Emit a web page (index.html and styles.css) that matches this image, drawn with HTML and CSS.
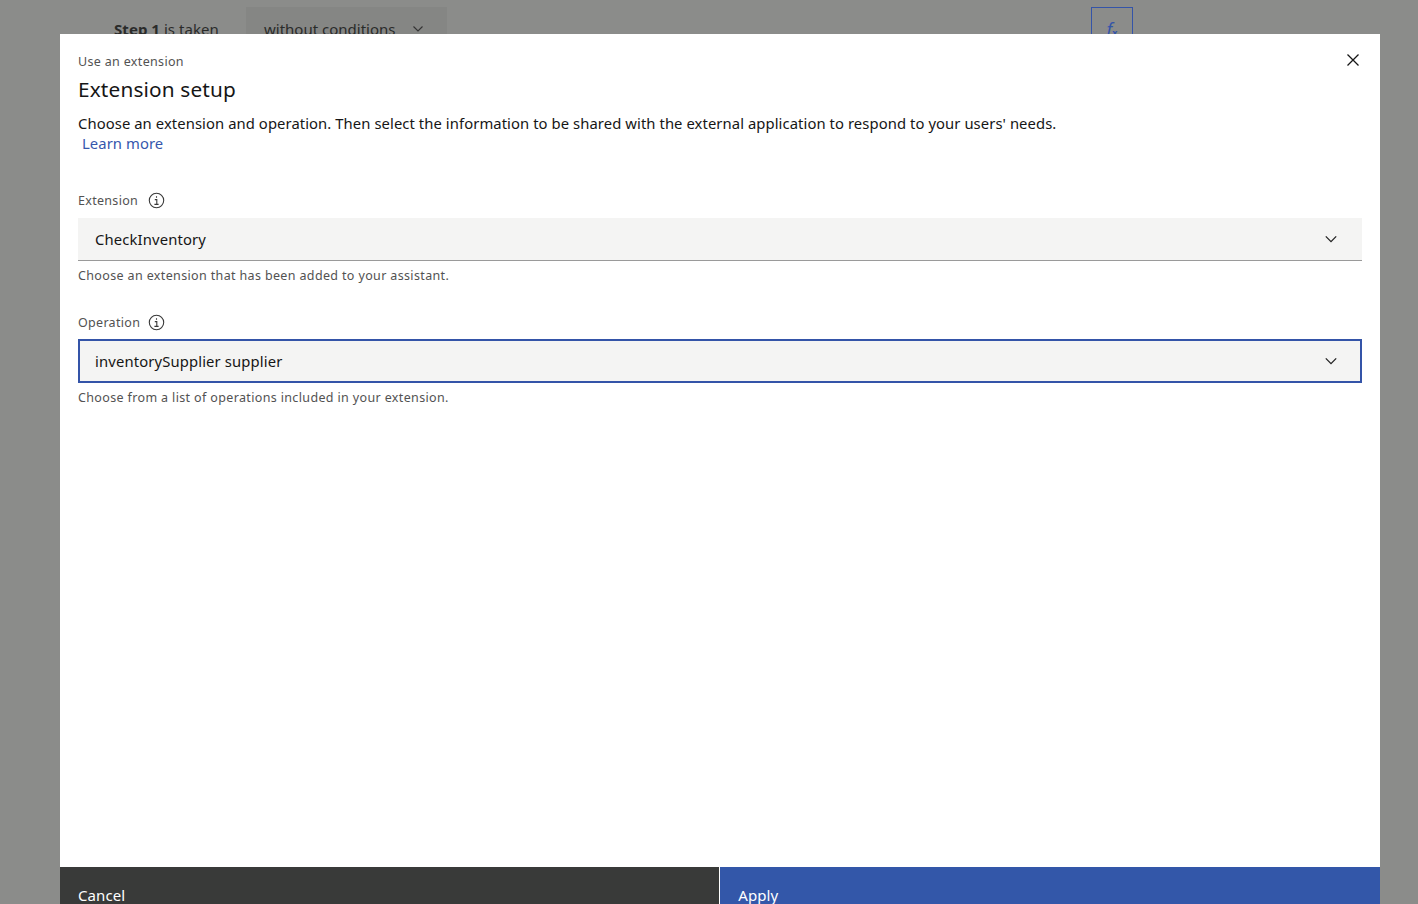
FILE: index.html
```html
<!DOCTYPE html>
<html lang="en">
<head>
<meta charset="utf-8">
<title>Extension setup</title>
<link rel="stylesheet" href="styles.css">
</head>
<body>
<div class="behind">
  <div class="behind-step"><b>Step 1</b> is taken</div>
  <div class="behind-select">without conditions
    <svg class="chev" width="16" height="16" viewBox="0 0 16 16"><path d="M3.5 5.5 8 10l4.5-4.5" fill="none" stroke="#333" stroke-width="1.1"/></svg>
  </div>
  <div class="behind-fx"><span class="fx-f">f</span><span class="fx-x">x</span></div>
</div>
<div class="modal">
  <header class="head">
    <div class="eyebrow">Use an extension</div>
    <h1 class="title">Extension setup</h1>
    <p class="desc">Choose an extension and operation. Then select the information to be shared with the external application to respond to your users' needs.</p>
    <a class="learn" href="#">Learn more</a>
    <button class="close" aria-label="Close">
      <svg width="14" height="14" viewBox="0 0 14 14"><path d="M1.5 1.5l11 11M12.5 1.5l-11 11" fill="none" stroke="#161616" stroke-width="1.3"/></svg>
    </button>
  </header>
  <div class="body">
    <div class="field">
      <div class="label"><span class="label-text">Extension</span>
        <svg class="info" width="17" height="17" viewBox="0 0 17 17"><circle cx="8.5" cy="8.5" r="7.2" fill="none" stroke="#393939" stroke-width="1.1"/><path d="M8.5 4.2v1.5M6.8 7.6h2v4.6M6.4 12.4h4.2" fill="none" stroke="#393939" stroke-width="1.1"/></svg>
      </div>
      <div class="select">
        <span>CheckInventory</span>
        <svg width="14" height="14" viewBox="0 0 14 14"><path d="M1.8 4.4 7 9.6l5.2-5.2" fill="none" stroke="#222" stroke-width="1.3"/></svg>
      </div>
      <div class="helper">Choose an extension that has been added to your assistant.</div>
    </div>
    <div class="field">
      <div class="label"><span class="label-text">Operation</span>
        <svg class="info" width="17" height="17" viewBox="0 0 17 17"><circle cx="8.5" cy="8.5" r="7.2" fill="none" stroke="#393939" stroke-width="1.1"/><path d="M8.5 4.2v1.5M6.8 7.6h2v4.6M6.4 12.4h4.2" fill="none" stroke="#393939" stroke-width="1.1"/></svg>
      </div>
      <div class="select focused">
        <span>inventorySupplier supplier</span>
        <svg width="14" height="14" viewBox="0 0 14 14"><path d="M1.8 4.4 7 9.6l5.2-5.2" fill="none" stroke="#222" stroke-width="1.3"/></svg>
      </div>
      <div class="helper">Choose from a list of operations included in your extension.</div>
    </div>
  </div>
  <footer class="foot">
    <button class="btn cancel">Cancel</button>
    <button class="btn apply">Apply</button>
  </footer>
</div>
</body>
</html>
```

FILE: styles.css
```css
* { box-sizing: border-box; }
html, body { margin: 0; height: 100%; }
body {
  position: relative;
  width: 1418px;
  height: 904px;
  overflow: hidden;
  background: #8b8c8a;
  font-family: "Noto Sans", "Liberation Sans", sans-serif;
  color: #161616;
}
.behind {
  display: flex;
  align-items: flex-start;
  padding: 7px 0 0 114px;
  color: #2a2b2a;
  font-size: 15px;
}
.behind-step { width: 132px; padding-top: 12px; line-height: 20px; letter-spacing: .05px; }
.behind-select {
  display: flex;
  gap: 15px;
  width: 201px;
  height: 40px;
  padding: 12px 0 0 18px;
  line-height: 20px;
  background: #858684;
}
.chev { margin-top: 2px; }
.behind-fx {
  width: 42px;
  height: 40px;
  margin-left: 644px;
  border: 1px solid #3454a8;
  color: #3454a8;
  text-align: center;
  padding-top: 11px;
  line-height: 20px;
}
.fx-f { font-size: 18px; font-style: italic; }
.fx-x { font-size: 9px; font-weight: 700; }
.modal {
  position: absolute;
  left: 60px;
  top: 34px;
  width: 1319.5px;
  height: 870px;
  background: #fff;
  display: flex;
  flex-direction: column;
}
.head { position: relative; padding: 18px 18px 0; }
.eyebrow { font-size: 12.5px; line-height: 18px; color: #525252; letter-spacing: .33px; padding-top: 1px; }
.title { margin: 4px 0 0; font-size: 20.8px; line-height: 28px; font-weight: 400; letter-spacing: .15px; }
.desc { margin: 10px 0 0; font-size: 14.8px; line-height: 20px; letter-spacing: .08px; }
.learn { display: block; margin-left: 4px; font-size: 14.8px; line-height: 20px; letter-spacing: .08px; color: #3557ad; text-decoration: none; }
.close {
  position: absolute;
  top: 19px;
  right: 20px;
  padding: 0;
  border: 0;
  background: none;
  display: flex;
}
.body { flex: 1; padding: 37px 18px 0; display: flex; flex-direction: column; gap: 27px; }
.label {
  display: flex;
  align-items: center;
  gap: 9px;
  height: 20px;
  font-size: 12.5px;
  letter-spacing: .3px;
  color: #525252;
}
.label-text { width: 61px; white-space: nowrap; }
.select {
  display: flex;
  align-items: center;
  justify-content: space-between;
  height: 43px;
  margin-top: 8px;
  padding: 0 24px 0 17px;
  background: #f4f4f3;
  border-bottom: 1.5px solid #9a9a9a;
  font-size: 14.8px;
  letter-spacing: .14px;
}
.select.focused { border: 2.5px solid #3454a8; padding: 0 21.5px 0 15px; margin-top: 7px; height: 44px; }
.helper { margin-top: 6px; font-size: 12.5px; line-height: 18px; letter-spacing: .36px; color: #525252; }
.foot { display: flex; height: 37px; gap: 1px; flex: none; }
.btn {
  flex: 1;
  border: 0;
  padding: 18px 18px 0;
  text-align: left;
  font: inherit;
  font-size: 15px;
  line-height: 20px;
  letter-spacing: .1px;
  color: #fff;
  overflow: hidden;
}
.cancel { background: #393a39; }
.apply { background: #3357a9; }
```
